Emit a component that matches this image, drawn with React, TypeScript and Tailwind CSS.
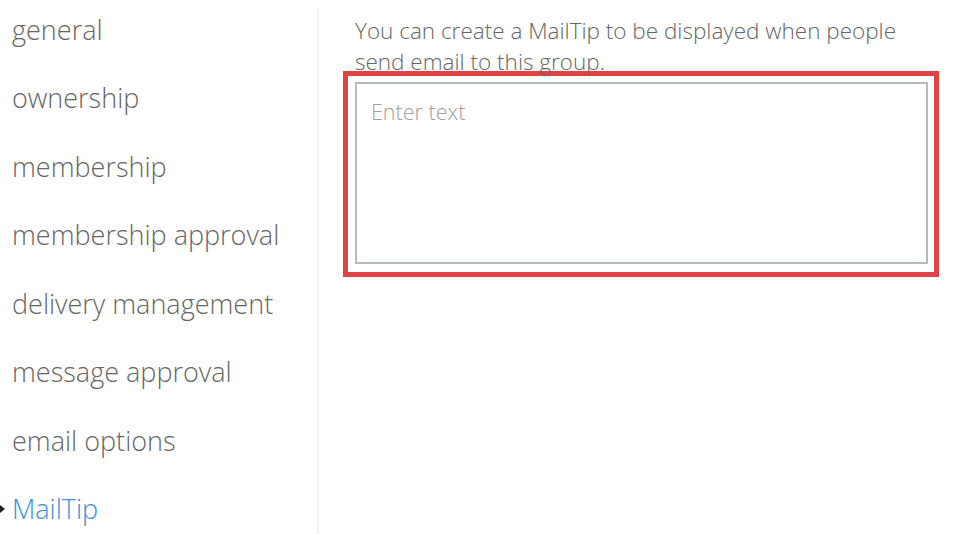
import React from "react";

const navItems = [
  "general",
  "ownership",
  "membership",
  "membership approval",
  "delivery management",
  "message approval",
  "email options",
  "MailTip",
];

export default function App() {
  const active = "MailTip";

  return (
    <div className="flex w-[954px] h-[534px] overflow-hidden bg-white font-['Open_Sans',sans-serif]">
      {/* left nav */}
      <div className="w-[317px] shrink-0 -mt-[4px]">
        {navItems.map((item) => (
          <div
            key={item}
            className={
              item === active
                ? "relative pl-[12px] h-[68.43px] leading-[68.43px] text-[27px] font-light text-[#3d8fd8] whitespace-nowrap"
                : "relative pl-[12px] h-[68.43px] leading-[68.43px] text-[27px] font-light text-[#666] whitespace-nowrap"
            }
          >
            {item === active && (
              <span className="absolute left-0 top-1/2 -translate-y-1/2 w-0 h-0 border-y-[4px] border-y-transparent border-l-[5px] border-l-[#222]" />
            )}
            {item}
          </div>
        ))}
      </div>

      <div className="w-[2px] shrink-0 mt-[9px] bg-[#f0f0f0]" />

      {/* content */}
      <div className="flex-1 pl-[24px] pt-[15px] pr-[15px]">
        <p className="pl-[12px] text-[22.5px] leading-[31px] font-light text-[#666] w-[580px]">
          You can create a MailTip to be displayed when people send email to this group.
        </p>
        <div className="-mt-[6px] w-[596px] h-[206px] border-[5px] border-[#e04343] pl-[7px] pt-[6px]">
          <textarea
            placeholder="Enter text"
            className="block w-[573px] h-[182px] border-2 border-[#b3babc] resize-none outline-none px-[14px] py-[15px] text-[21.5px] leading-[26px] font-light text-[#333] placeholder:text-[#a0a0a0] font-['Open_Sans',sans-serif]"
          />
        </div>
      </div>
    </div>
  );
}
